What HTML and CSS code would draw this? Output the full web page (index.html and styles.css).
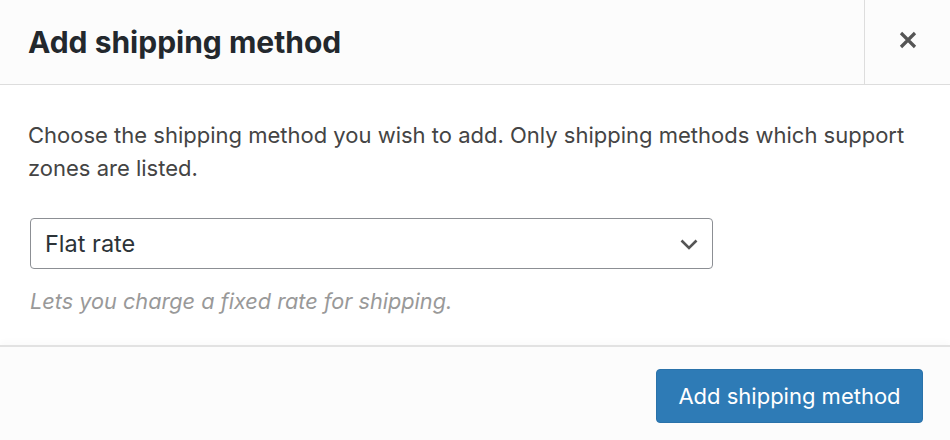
FILE: index.html
```html
<!DOCTYPE html>
<html lang="en">
<head>
<meta charset="utf-8">
<title>Add shipping method</title>
<link rel="stylesheet" href="styles.css">
</head>
<body>
<div class="modal">
  <header class="modal-header">
    <h1 class="modal-title">Add shipping method</h1>
    <button class="modal-close" type="button" aria-label="Close">
      <svg width="18" height="18" viewBox="0 0 18 18"><path d="M2 2 L16 16 M16 2 L2 16" stroke="#555" stroke-width="3.2" fill="none"/></svg>
    </button>
  </header>
  <section class="modal-body">
    <p class="intro">Choose the shipping method you wish to add. Only shipping methods which support zones are listed.</p>
    <div class="select">
      <span class="select-value">Flat rate</span>
      <svg class="chevron" width="18" height="11" viewBox="0 0 18 11"><path d="M1.5 1.5 L9 9 L16.5 1.5" stroke="#555" stroke-width="2.6" fill="none"/></svg>
    </div>
    <p class="desc">Lets you charge a fixed rate for shipping.</p>
  </section>
  <footer class="modal-footer">
    <button class="btn-primary" type="button">Add shipping method</button>
  </footer>
</div>
</body>
</html>
```

FILE: styles.css
```css
html, body {
  margin: 0;
  padding: 0;
  background: #fcfcfc;
}
body {
  font-family: Inter, "Liberation Sans", Arial, sans-serif;
  color: #3c3c3c;
}
.modal {
  width: 950px;
  height: 440px;
  display: flex;
  flex-direction: column;
  overflow: hidden;
}
.modal-header {
  height: 84px;
  display: flex;
  align-items: stretch;
  background: #fcfcfc;
  border-bottom: 1px solid #dddddd;
}
.modal-title {
  flex: 1;
  margin: 0;
  padding-left: 28px;
  display: flex;
  align-items: center;
  font-size: 30px;
  font-weight: 700;
  color: #23282d;
}
.modal-close {
  width: 86px;
  border: 0;
  border-left: 1px solid #dddddd;
  background: transparent;
  padding: 0 0 4px 0;
  display: flex;
  align-items: center;
  justify-content: center;
  cursor: pointer;
}
.modal-body {
  background: #ffffff;
  padding: 34px 28px 30px 28px;
}
.intro {
  margin: 0;
  font-size: 22px;
  line-height: 33px;
  color: #444444;
}
.select {
  margin: 33px 0 0 2px;
  width: 683px;
  height: 51px;
  box-sizing: border-box;
  border: 1px solid #8c8f94;
  border-radius: 4px;
  background: #ffffff;
  display: flex;
  align-items: center;
  justify-content: space-between;
  padding: 0 14px 0 14px;
}
.select-value {
  font-size: 23.5px;
  color: #2c3338;
}
.chevron {
  margin-top: 1px;
}
.desc {
  margin: 18px 0 0 2px;
  font-size: 21.7px;
  line-height: 28px;
  font-style: italic;
  color: #999999;
}
.modal-footer {
  flex: 1;
  background: #fcfcfc;
  border-top: 2px solid #e2e2e2;
  box-shadow: 0 -4px 6px rgba(0,0,0,0.02);
  display: flex;
  justify-content: flex-end;
  align-items: flex-start;
  padding: 22px 27px 0 0;
}
.btn-primary {
  width: 267px;
  height: 54px;
  border: 1px solid #2a72aa;
  border-radius: 4px;
  background: #2e7bb6;
  color: #ffffff;
  font-family: Inter, "Liberation Sans", Arial, sans-serif;
  font-size: 22px;
  cursor: pointer;
}
```
